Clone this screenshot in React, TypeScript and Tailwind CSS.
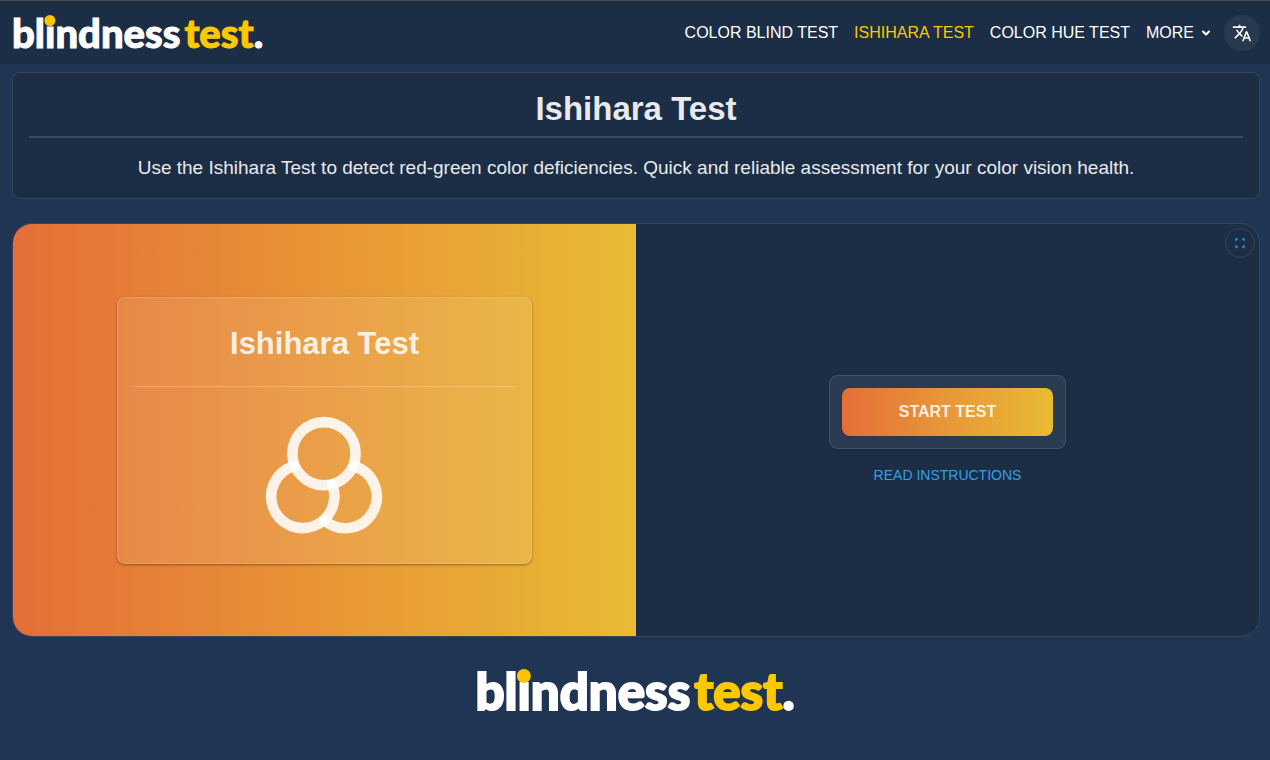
import { ChevronDown } from 'lucide-react'
import { MdTranslate } from 'react-icons/md'

const links = [
  { label: 'COLOR BLIND TEST', href: '#color-blind-test', active: false },
  { label: 'ISHIHARA TEST', href: '#ishihara-test', active: true },
  { label: 'COLOR HUE TEST', href: '#color-hue-test', active: false },
]

function Logo({ large = false }: { large?: boolean }) {
  return (
    <a
      href="#home"
      className={`flex items-baseline gap-1 font-['Lato'] font-black leading-none text-white ${
        large
          ? 'text-[51px] [-webkit-text-stroke:2px_currentColor]'
          : 'text-[40px] [-webkit-text-stroke:1px_currentColor]'
      }`}
    >
      <span>
        bl
        <span className="relative">
          i
          <span className="absolute left-1/2 top-[0.17em] size-[0.28em] -translate-x-1/2 rounded-full bg-[#fdc400]" />
        </span>
        ndness
      </span>
      <span>
        <span className="text-[#fdc800]">test</span>.
      </span>
    </a>
  )
}

function CirclesIcon() {
  return (
    <svg
      viewBox="0 0 128 128"
      className="size-32"
      fill="none"
      stroke="#ffffff"
      strokeOpacity="0.87"
      strokeWidth="10.6"
      strokeLinecap="round"
      aria-hidden="true"
    >
      <circle cx="64" cy="42.7" r="31.6" />
      <path d="M34 55.1A31.6 31.6 0 1 0 72 73.5" />
      <path d="M93.6 55.1A31.6 31.6 0 1 1 64.6 109.5" />
    </svg>
  )
}

function ExpandIcon() {
  return (
    <svg
      viewBox="0 0 12 12"
      className="size-3"
      fill="none"
      stroke="#2687c4"
      strokeWidth="1.8"
      strokeLinecap="round"
      strokeLinejoin="round"
      aria-hidden="true"
    >
      <path d="M2 3.2V2h1.2M8.8 2H10v1.2M10 8.8V10H8.8M3.2 10H2V8.8" />
    </svg>
  )
}

export default function App() {
  return (
    <div className="min-h-screen bg-[#203553] font-['Liberation_Sans',Arial,sans-serif]">
      <header className="border-t border-[#484a4c] bg-[#1c2e45]">
        <nav className="flex h-[63px] items-center justify-between pl-3 pr-2.5">
          <Logo />
          <div className="flex items-center gap-3">
            <ul className="flex items-center gap-4 text-base text-white">
              {links.map((link) => (
                <li key={link.label}>
                  <a href={link.href} className={link.active ? 'text-[#fdc800]' : ''}>
                    {link.label}
                  </a>
                </li>
              ))}
              <li>
                <button type="button" className="flex items-center gap-1.5">
                  MORE
                  <ChevronDown size={12} strokeWidth={4} />
                </button>
              </li>
            </ul>
            <button
              type="button"
              aria-label="Change language"
              className="flex size-9 items-center justify-center rounded-full bg-[#28394f] text-white"
            >
              <MdTranslate size={20} />
            </button>
          </div>
        </nav>
      </header>

      <main className="pl-3 pr-2.5 pt-2">
        <section className="rounded-lg border border-[#35465c] bg-[#1c2e45] p-4 text-center text-[#e8eaec]">
          <h1 className="border-b-2 border-[#3b4a60] pb-[7px] text-[33px] font-bold leading-10">
            Ishihara Test
          </h1>
          <p className="pt-4 text-[19px] leading-7">
            Use the Ishihara Test to detect red-green color deficiencies. Quick and reliable
            assessment for your color vision health.
          </p>
        </section>

        <section className="relative mt-6 grid min-h-[414px] grid-cols-2 overflow-hidden rounded-[20px] border border-[#35465c] bg-[#1c2e45]">
          <div className="flex items-center justify-center bg-linear-to-r/srgb from-[#e46e37] via-[#e89535] to-[#e9bb34]">
            <div className="flex w-2/3 flex-col items-center rounded-lg border border-white/15 bg-white/10 px-4 py-6 shadow-sm shadow-black/30">
              <h2 className="w-full border-b border-white/25 pb-[22px] pt-0.5 text-center text-[31px] font-bold leading-10 text-white/87">
                Ishihara Test
              </h2>
              <div className="pt-6">
                <CirclesIcon />
              </div>
            </div>
          </div>

          <div className="flex flex-col items-center justify-center">
            <div className="w-[38%] rounded-lg border border-[#435266] bg-[#2a3b51] p-3 shadow-sm">
              <button
                type="button"
                className="h-12 w-full rounded-lg bg-linear-to-r/srgb from-[#e46e37] via-[#e89838] to-[#e9bb34] text-base font-bold text-white/87"
              >
                START TEST
              </button>
            </div>
            <a href="#instructions" className="mt-4 text-sm text-[#359fe8]">
              READ INSTRUCTIONS
            </a>
          </div>

          <button
            type="button"
            aria-label="Full screen"
            className="absolute right-1 top-1 flex size-[30px] items-center justify-center rounded-full border border-[#35465c]"
          >
            <ExpandIcon />
          </button>
        </section>
      </main>

      <footer className="flex justify-center pt-7">
        <Logo large />
      </footer>
    </div>
  )
}
